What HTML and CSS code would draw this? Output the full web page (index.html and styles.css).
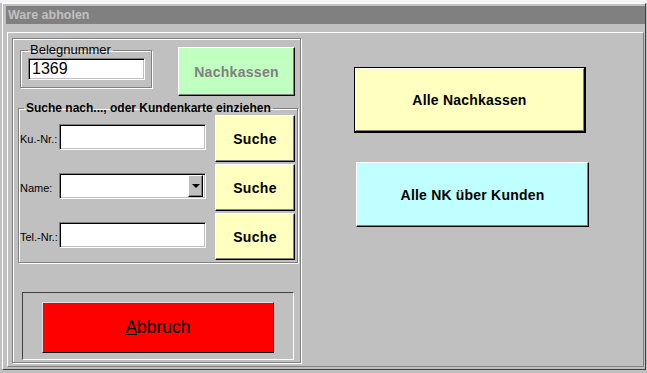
FILE: index.html
```html
<!DOCTYPE html>
<html lang="de">
<head>
    <meta charset="UTF-8">
    <title>Ware abholen</title>
    <link rel="stylesheet" href="styles.css">
</head>
<body>

<div class="screen">
    <div class="strip"></div>
    <div class="window">
        <div class="titlebar">Ware abholen</div>
        <div class="frame">

            <div class="panel-left">
                <div class="top-row">
                    <fieldset class="beleg">
                        <legend>Belegnummer</legend>
                        <input type="text" class="field beleg-input" value="1369">
                    </fieldset>
                    <button class="btn btn-green">Nachkassen</button>
                </div>

                <fieldset class="suche">
                    <legend>Suche nach..., oder Kundenkarte einziehen</legend>
                    <div class="row">
                        <label>Ku.-Nr.:</label>
                        <input type="text" class="field">
                        <button class="btn btn-yellow">Suche</button>
                    </div>
                    <div class="row">
                        <label>Name:</label>
                        <div class="field combo">
                            <span class="combo-btn"><span class="arrow"></span></span>
                        </div>
                        <button class="btn btn-yellow">Suche</button>
                    </div>
                    <div class="row">
                        <label>Tel.-Nr.:</label>
                        <input type="text" class="field">
                        <button class="btn btn-yellow">Suche</button>
                    </div>
                </fieldset>

                <div class="abbruch-frame">
                    <button class="btn btn-red"><u>A</u>bbruch</button>
                </div>
            </div>

            <div class="panel-right">
                <button class="btn btn-big btn-alle">Alle Nachkassen</button>
                <button class="btn btn-big btn-kunden">Alle NK über Kunden</button>
            </div>

        </div>
    </div>
</div>

</body>
</html>
```

FILE: styles.css
```css
html, body {
    margin: 0;
    padding: 0;
    overflow: hidden;
}
body {
    font-family: "Liberation Sans", Arial, sans-serif;
    background-color: #c0c0c0;
}
.screen {
    width: 647px;
    height: 373px;
    background-color: #c0c0c0;
    overflow: hidden;
}
.strip {
    height: 3px;
    background-color: #f4f4f4;
}
.window {
    width: 644px;
    margin-left: 2px;
    box-sizing: border-box;
    border-left: 1px solid #fff;
    border-top: 1px solid #fff;
    border-right: 1px solid #404040;
    border-bottom: 1px solid #404040;
    padding: 2px 0 2px 3px;
}
.titlebar {
    height: 18px;
    line-height: 18px;
    background-color: #808080;
    color: #c0c0c0;
    font-weight: bold;
    font-size: 12.5px;
    padding-left: 2px;
}
.frame {
    display: flex;
    margin: 8px 0 0 1px;
    width: 637px;
    height: 335px;
    box-sizing: border-box;
    border: 1px solid;
    border-color: #fff #808080 #808080 #fff;
    padding: 5px 0 0 4px;
}
.panel-left {
    width: 289px;
    height: 325px;
    box-sizing: border-box;
    border: 1px solid #808080;
    box-shadow: 1px 1px 0 #fff, inset 1px 1px 0 #fff;
}
.top-row {
    display: flex;
    align-items: flex-start;
    margin: 4px 0 0 7px;
}
fieldset {
    margin: 0;
    box-sizing: border-box;
    border: 1px solid #808080;
    box-shadow: 1px 1px 0 #fff, inset 1px 1px 0 #fff;
}
.beleg {
    width: 132px;
    height: 45px;
    padding: 1px 0 0 7px;
}
.beleg legend {
    font-size: 13px;
    line-height: 14px;
    padding: 0 2px;
    color: #000;
}
.field {
    box-sizing: border-box;
    background-color: #fff;
    border: 1px solid;
    border-color: #808080 #fff #fff #808080;
    box-shadow: inset 1px 1px 0 #000, inset -1px -1px 0 #c0c0c0;
    margin: 0;
    outline: none;
    font-family: "Liberation Sans", Arial, sans-serif;
}
.beleg-input {
    display: block;
    width: 117px;
    height: 22px;
    font-size: 16px;
    padding: 0 0 0 3px;
    color: #000;
}
.btn {
    box-sizing: border-box;
    border: 1px solid;
    border-color: #fff #000 #000 #fff;
    box-shadow: inset -1px -1px 0 #808080;
    font-family: "Liberation Sans", Arial, sans-serif;
    font-weight: bold;
    padding: 0;
    margin: 0;
    color: #000;
}
.btn-green {
    background-color: #c0ffc0;
    color: #808080;
    width: 117px;
    height: 49px;
    margin: 4px 0 0 26px;
    font-size: 14px;
    letter-spacing: 0.3px;
}
.suche {
    width: 280px;
    margin: 6px 0 0 5px;
    padding: 0 0 2px 1px;
}
.suche legend {
    font-size: 12px;
    font-weight: bold;
    line-height: 13px;
    padding: 0 2px;
    margin-left: 4px;
    color: #000;
}
.row {
    display: flex;
    align-items: center;
    margin-bottom: 2px;
}
.row:last-child {
    margin-bottom: 0;
}
.row label {
    width: 39px;
    font-size: 11px;
    color: #000;
}
.row .field {
    width: 147px;
    height: 26px;
    margin-top: -3px;
}
.combo {
    display: flex;
    justify-content: flex-end;
    align-items: center;
    padding-right: 2px;
}
.combo-btn {
    width: 15px;
    height: 22px;
    box-sizing: border-box;
    background-color: #c0c0c0;
    border: 1px solid;
    border-color: #fff #000 #000 #fff;
    box-shadow: inset -1px -1px 0 #808080;
    display: flex;
    justify-content: center;
    align-items: center;
}
.arrow {
    width: 0;
    height: 0;
    border-left: 4px solid transparent;
    border-right: 4px solid transparent;
    border-top: 4px solid #000;
}
.btn-yellow {
    background-color: #ffffc0;
    width: 80px;
    height: 47px;
    margin-left: 9px;
    font-size: 14px;
    letter-spacing: 0.3px;
}
.abbruch-frame {
    width: 272px;
    height: 68px;
    box-sizing: border-box;
    margin: 29px 0 0 9px;
    border: 1px solid;
    border-color: #404040 #fff #fff #404040;
    padding: 9px 0 0 19px;
}
.btn-red {
    display: block;
    background-color: #ff0000;
    width: 232px;
    height: 51px;
    font-weight: normal;
    font-size: 17.5px;
    border-color: #e0e0e0 #000 #000 #e0e0e0;
    box-shadow: none;
}
.panel-right {
    display: flex;
    flex-direction: column;
    align-items: flex-start;
}
.btn-big {
    font-size: 14px;
    letter-spacing: 0.2px;
}
.btn-alle {
    background-color: #ffffc0;
    width: 232px;
    height: 66px;
    margin: 29px 0 0 53px;
    border: 1px solid #000;
    border-right-width: 2px;
    border-bottom-width: 2px;
    box-shadow: inset 1px 1px 0 #fff, inset -1px -1px 0 #808080;
}
.btn-kunden {
    background-color: #c0ffff;
    width: 233px;
    height: 65px;
    margin: 29px 0 0 55px;
}
```
